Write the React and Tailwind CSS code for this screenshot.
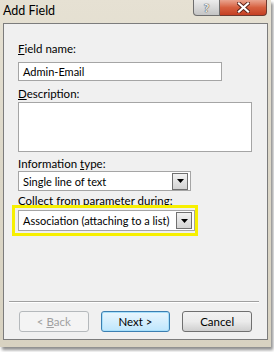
const font = "font-['Lato','Noto_Sans',sans-serif]"

const Label = ({ children, className = '' }) => (
  <div className={`text-[11.5px] leading-[15px] text-black ${className}`}>{children}</div>
)

const DropButton = ({ className = '' }) => (
  <div
    className={`flex items-center justify-center w-[16px] h-[17px] border border-[#707070] bg-gradient-to-b from-[#f2f2f2] to-[#d4d4d4] ${className}`}
  >
    <svg width="7" height="4" viewBox="0 0 7 4">
      <path d="M0 0 L7 0 L3.5 4 Z" fill="#000" />
    </svg>
  </div>
)

const Select = ({ value, className = '' }) => (
  <div
    className={`flex items-center justify-between h-[20px] border border-[#a5a5a5] bg-white pl-[4px] pr-[2px] ${className}`}
  >
    <span className="text-[11px] leading-[15px] text-black whitespace-nowrap">{value}</span>
    <DropButton />
  </div>
)

const Button = ({ children, variant = 'normal' }) => {
  const styles = {
    disabled: 'border-[#b5b9bc] bg-[#f4f4f4] text-[#a0a0a0]',
    default: 'border-[#3c7fb1] bg-gradient-to-b from-[#eaf6fd] to-[#bee6fd] text-black shadow-[inset_0_0_0_1px_#a8e0fb]',
    normal: 'border-[#707070] bg-gradient-to-b from-[#f2f2f2] via-[#ebebeb] to-[#cfcfcf] text-black',
  }
  return (
    <div
      className={`flex items-center justify-center w-[73px] h-[21px] rounded-[3px] border text-[11.5px] leading-[15px] ${styles[variant]}`}
    >
      {children}
    </div>
  )
}

export default function App() {
  return (
    <div className={`w-[274px] h-[352px] bg-white ${font}`}>
      <div className="flex flex-col w-[271px] h-[347px] bg-gradient-to-b from-[#e6e1d3] via-[#dcd7c8] to-[#d8d2c1] shadow-[2px_3px_3px_rgba(0,0,0,0.45)]">
        {/* Title bar */}
        <div className="flex items-start justify-between h-[23px] pl-[3px] pr-[4px]">
          <div className="pt-[3px] text-[12.5px] leading-[16px] text-black">Add Field</div>
          <div className="flex h-[16px]">
            <div className="flex items-center justify-center w-[27px] h-[16px] border border-[#6e6e6e] border-t-0 rounded-bl-[4px] bg-gradient-to-b from-[#ececec] to-[#c4c4c4]">
              <span className="text-[12px] leading-[12px] font-bold text-[#f4f4f4] [text-shadow:0_0_1px_#333,0_0_1px_#333]">?</span>
            </div>
            <div className="flex items-center justify-center w-[47px] h-[16px] border border-[#6e3a30] border-l-0 border-t-0 rounded-br-[4px] bg-gradient-to-b from-[#e9a48f] via-[#d6603f] to-[#c53f23]">
              <svg width="13" height="11" viewBox="0 0 13 11">
                <path d="M2 1.5 L11 9.5 M11 1.5 L2 9.5" stroke="#5a2218" strokeWidth="4" strokeLinecap="square" />
                <path d="M2 1.5 L11 9.5 M11 1.5 L2 9.5" stroke="#fff" strokeWidth="2.2" strokeLinecap="square" />
              </svg>
            </div>
          </div>
        </div>

        {/* Client area */}
        <div className="flex flex-col flex-1 mx-[3px] mb-[7px] border border-[#7c7c7c] bg-[#f0f0f0] pt-[17px] pl-[14px] pr-[15px]">
          <Label>
            <span className="underline">F</span>ield name:
          </Label>
          <div className="mt-[6px] flex items-center w-[204px] h-[19px] border border-[#a5a5a5] bg-white pl-[4px] text-[11px] leading-[15px]">
            Admin-Email
          </div>

          <Label className="mt-[5px]">
            <span className="underline">D</span>escription:
          </Label>
          <div className="mt-[1px] w-[234px] h-[50px] border border-[#a5a5a5] bg-white" />

          <Label className="mt-[4px]">
            Information <span className="underline">t</span>ype:
          </Label>
          <Select value="Single line of text" className="w-[173px]" />

          <Label className="mt-[2px]">Collect from parameter during:</Label>
          <div className="-mt-[3px] -ml-[6px] w-[186px] border-[3px] border-[#f7f000] pt-[2px] pb-[2px] pl-[3px]">
            <Select value="Association (attaching to a list)" className="h-[21px] w-[177px]" />
          </div>

          <div className="flex-1" />

          {/* Separator */}
          <div className="-ml-[9px] w-[250px] border-t border-[#a0a0a0] border-b border-b-white" />

          <div className="flex gap-[12px] mt-[8px] mb-[7px] ml-[1px]">
            <Button variant="disabled">
              &lt; <span className="underline ml-[3px]">B</span>ack
            </Button>
            <Button variant="default">Next &gt;</Button>
            <Button>Cancel</Button>
          </div>
        </div>
      </div>
    </div>
  )
}
